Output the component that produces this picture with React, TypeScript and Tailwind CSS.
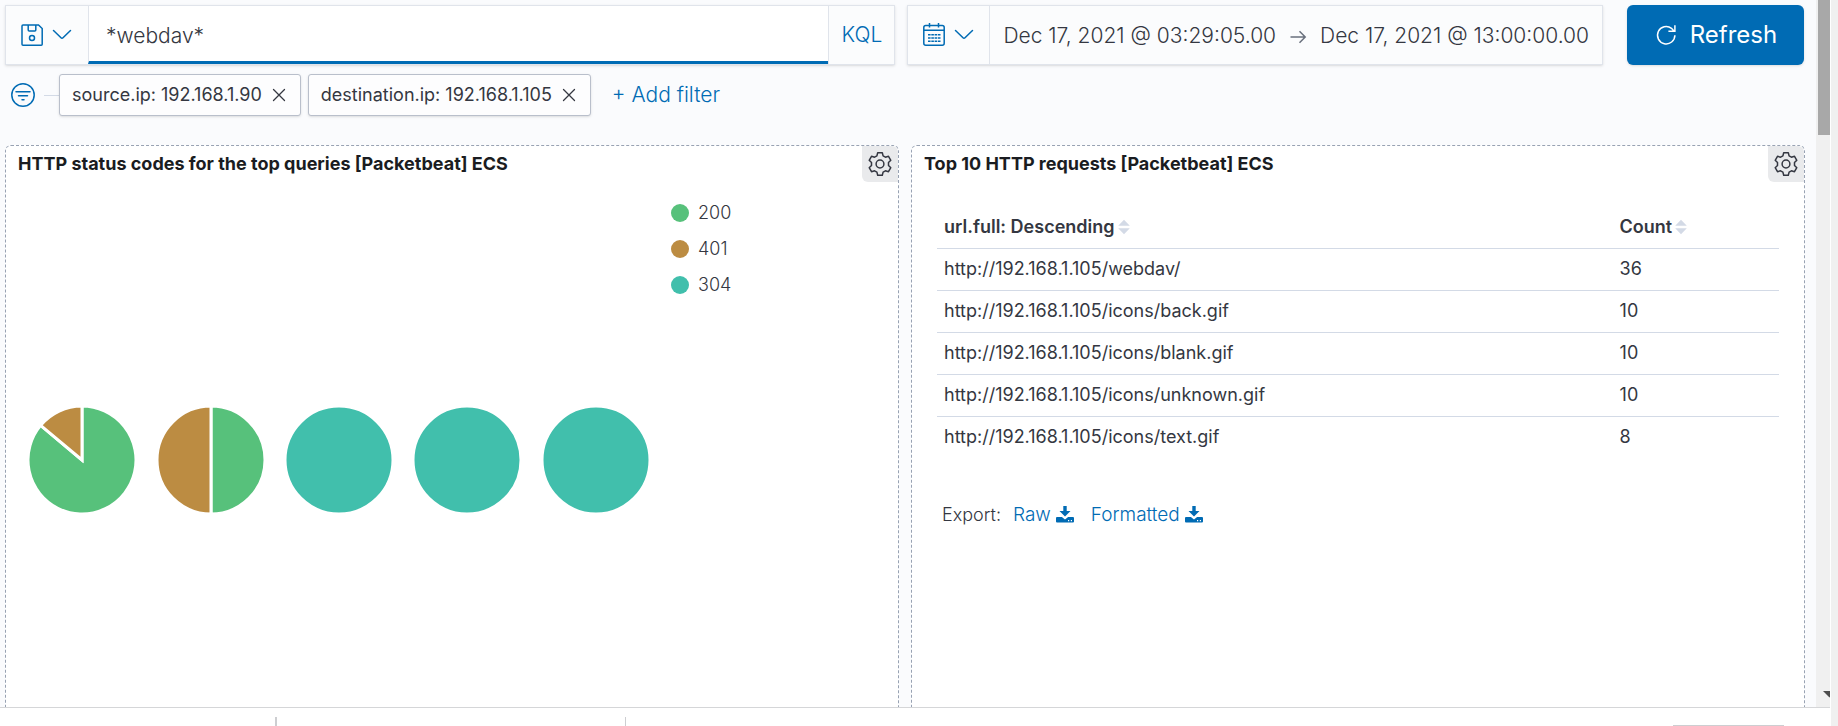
import type { ReactNode } from "react";

function Icon({ children, className = "size-6" }: { children: ReactNode; className?: string }) {
  return (
    <svg
      viewBox="0 0 24 24"
      className={`${className} shrink-0`}
      fill="none"
      stroke="currentColor"
      strokeWidth="1.5"
      aria-hidden="true"
    >
      {children}
    </svg>
  );
}

const ChevronDown = () => (
  <Icon>
    <path d="M3.500 7.500 11 14.800a1.400 1.400 0 0 0 2 0L20.500 7.500" strokeLinecap="round" />
  </Icon>
);

const SaveIcon = () => (
  <Icon>
    <path d="M3 2h15.500L22.200 5.500V21.200a1 1 0 0 1-1 1H3a1 1 0 0 1-1-1V3a1 1 0 0 1 1-1Z" />
    <path d="M8.200 2v5a1 1 0 0 0 1 1h5.600a1 1 0 0 0 1-1V2" />
    <circle cx="12" cy="15" r="2.500" />
  </Icon>
);

const CalendarIcon = () => (
  <Icon>
    <rect x="1.800" y="2.500" width="20.400" height="19.700" rx="2" />
    <path d="M1.800 7.200h20.400M7.500 0v4.500M16.500 0v4.500" />
    <path d="M6 11.800h12.500M6 15h12.500M6 18.200h12.500" strokeDasharray="2.600 0.700" strokeWidth="1.400" />
  </Icon>
);

const FilterIcon = () => (
  <Icon>
    <circle cx="12" cy="12" r="11.200" />
    <path d="M5 8.700h14M7.500 12.700h9M11 16.700h2" strokeLinecap="round" />
  </Icon>
);

const CrossIcon = () => (
  <svg viewBox="0 0 18 18" className="size-[18px]" fill="none" stroke="currentColor" strokeWidth="1.3" aria-hidden="true">
    <path d="m3.500 3.500 11 11M14.500 3.500l-11 11" strokeLinecap="round" />
  </svg>
);

const GearIcon = () => (
  <Icon>
    <path
      strokeLinejoin="round"
      d="M9.700.8h4.600l.8 3.100 2.300 1.300 3.100-.9 2.300 4-2.300 2.200v3l2.300 2.200-2.300 4-3.100-.9-2.300 1.300-.8 3.100H9.700l-.8-3.100-2.300-1.300-3.100.9-2.300-4 2.300-2.200v-3L1.200 8.300l2.300-4 3.100.9 2.300-1.300Z"
    />
    <circle cx="12" cy="12" r="3.900" />
  </Icon>
);

const RefreshIcon = () => (
  <Icon>
    <path d="M20.900 12.200a8.700 8.700 0 1 1-3.400-6.900l2.700 3M20.900 2.300v6h-6.500" />
  </Icon>
);

const ArrowRight = () => (
  <svg viewBox="0 0 18 18" className="size-[18px] shrink-0 text-[#69707d]" fill="none" stroke="currentColor" strokeWidth="1.5" aria-hidden="true">
    <path d="M1.500 10h14.500M10.500 4.300l5.700 5.700-5.700 5.700" />
  </svg>
);

const SortIcon = () => (
  <svg viewBox="0 0 12 16" className="h-4 w-3 text-[#d3dae6]" fill="currentColor" aria-hidden="true">
    <path d="M6 .8 11.800 6.800H.2ZM6 15.200 11.800 9.200H.2Z" />
  </svg>
);

const DownloadIcon = () => (
  <svg viewBox="0 0 18 18" className="size-[18px] text-[#006bb4]" fill="currentColor" aria-hidden="true">
    <path d="M7.300 0h3.400v5h3.800L9 10.500 3.500 5h3.800Z" />
    <path
      fillRule="evenodd"
      d="M1 11h4.900L9 13.500l3.100-2.500H17a1 1 0 0 1 1 1v3.600a1 1 0 0 1-1 1H1a1 1 0 0 1-1-1v-3.600a1 1 0 0 1 1-1Zm11 3v1.200h1.200v-1.200Zm2.800 0v1.200H16v-1.200Z"
    />
  </svg>
);

const GREEN = "#57c17b";
const BROWN = "#bc8c42";
const TEAL = "#41bfac";

const legend = [
  { code: "200", dot: "bg-[#57c17b]" },
  { code: "401", dot: "bg-[#bc8c42]" },
  { code: "304", dot: "bg-[#41bfac]" },
];

type Slice = { value: number; color: string };

const pies: Slice[][] = [
  [{ value: 31, color: GREEN }, { value: 5, color: BROWN }],
  [{ value: 5, color: GREEN }, { value: 5, color: BROWN }],
  [{ value: 10, color: TEAL }],
  [{ value: 10, color: TEAL }],
  [{ value: 8, color: TEAL }],
];

const requests = [
  { url: "http://192.168.1.105/webdav/", count: 36 },
  { url: "http://192.168.1.105/icons/back.gif", count: 10 },
  { url: "http://192.168.1.105/icons/blank.gif", count: 10 },
  { url: "http://192.168.1.105/icons/unknown.gif", count: 10 },
  { url: "http://192.168.1.105/icons/text.gif", count: 8 },
];

function Pie({ slices }: { slices: Slice[] }) {
  const total = slices.reduce((sum, s) => sum + s.value, 0);
  const r = 54;
  const point = (share: number) => {
    const a = share * 2 * Math.PI;
    return `${54 + r * Math.sin(a)} ${54 - r * Math.cos(a)}`;
  };
  let start = 0;
  return (
    <svg viewBox="0 0 108 108" className="size-[108px]" stroke="#fff" strokeWidth="3" role="img" aria-label="HTTP status codes">
      {slices.length === 1 ? (
        <circle cx="54" cy="54" r={r} fill={slices[0].color} />
      ) : (
        slices.map((s) => {
          const from = start;
          const share = s.value / total;
          start += share;
          return (
            <path
              key={s.color}
              fill={s.color}
              d={`M54 54L${point(from)}A${r} ${r} 0 ${share > 0.5 ? 1 : 0} 1 ${point(start)}Z`}
            />
          );
        })
      )}
    </svg>
  );
}

function Panel({ title, children }: { title: string; children: ReactNode }) {
  return (
    <section className="flex min-h-[600px] flex-1 flex-col rounded-md border border-dashed border-[#98a2b3] bg-white">
      <header className="flex items-start justify-between">
        <h2 className="pt-1 pl-3 text-lg leading-7 font-bold text-[#1a1c21]">{title}</h2>
        <button
          type="button"
          aria-label="Panel options"
          className="flex size-9 items-center justify-center rounded-tr-md rounded-bl-md bg-[#e9eaec] text-[#343741]"
        >
          <GearIcon />
        </button>
      </header>
      {children}
    </section>
  );
}

function FilterPill({ label }: { label: string }) {
  return (
    <span className="flex h-[42px] items-center gap-2 rounded-[3px] border border-[#b9bfcb] bg-[#fdfdfe] px-3 text-lg font-normal text-[#343741] shadow-sm">
      {label}
      <button type="button" aria-label={`Remove ${label}`}>
        <CrossIcon />
      </button>
    </span>
  );
}

export default function App() {
  return (
    <div className="flex h-screen overflow-hidden bg-white font-['Inter','Liberation_Sans',sans-serif] font-light text-[#343741]">
      <div className="flex min-w-0 flex-1 flex-col">
        <div className="flex min-h-0 flex-1">
          <main className="min-w-0 flex-1 overflow-hidden bg-[#fafbfd] pt-[5px] pr-[11px] pl-[5px]">
            <div className="flex pr-px text-[21px]">
              <div className="flex h-[60px] min-w-0 flex-1 border border-[#e0e4eb] bg-[#fbfcfd] shadow-sm">
                <button type="button" aria-label="Saved queries" className="flex w-[82px] items-center justify-center gap-1.5 text-[#006bb4]">
                  <SaveIcon />
                  <ChevronDown />
                </button>
                <input
                  aria-label="Search"
                  defaultValue="*webdav*"
                  className="min-w-0 flex-1 border-b-3 border-l border-b-[#006bb4] border-l-[#e0e4eb] bg-white px-[17px] pt-1 outline-none"
                />
                <button type="button" className="w-[66px] border-l border-[#e0e4eb] text-[#006bb4]">
                  KQL
                </button>
              </div>
              <div className="ml-3 flex h-[60px] border border-[#e0e4eb] bg-[#fbfcfd] shadow-sm">
                <button type="button" aria-label="Date quick select" className="flex w-[82px] items-center justify-center gap-1.5 border-r border-[#e0e4eb] text-[#006bb4]">
                  <CalendarIcon />
                  <ChevronDown />
                </button>
                <div className="flex items-center gap-[13px] px-[13px] pt-0.5">
                  <button type="button">Dec 17, 2021 @ 03:29:05.00</button>
                  <ArrowRight />
                  <button type="button">Dec 17, 2021 @ 13:00:00.00</button>
                </div>
              </div>
              <button
                type="button"
                className="ml-6 flex h-[60px] w-[177px] items-center justify-center gap-3 rounded-md bg-[#006bb4] text-2xl font-normal text-white shadow-sm"
              >
                <RefreshIcon />
                Refresh
              </button>
            </div>

            <div className="mt-[9px] flex items-center">
              <button type="button" aria-label="Filter options" className="ml-1.5 text-[#006bb4]">
                <FilterIcon />
              </button>
              <div className="ml-[9px] h-px w-[15px] bg-[#d3dae6]" />
              <div className="flex gap-[7px]">
                <FilterPill label="source.ip: 192.168.1.90" />
                <FilterPill label="destination.ip: 192.168.1.105" />
              </div>
              <button type="button" className="ml-[21px] text-[21px] text-[#006bb4]">
                + Add filter
              </button>
            </div>

            <div className="mt-[29px] flex gap-3">
              <Panel title="HTTP status codes for the top queries [Packetbeat] ECS">
                <div className="flex flex-1 px-3 pb-1.5">
                  <div className="grid flex-1 grid-cols-5 place-items-center">
                    {pies.map((slices, i) => (
                      <Pie key={i} slices={slices} />
                    ))}
                  </div>
                  <ul className="w-[226px] pt-[13px] pl-[11px] text-lg">
                    {legend.map((item) => (
                      <li key={item.code} className="flex h-9 items-center gap-[9px]">
                        <span className={`size-[18px] rounded-full ${item.dot}`} />
                        {item.code}
                      </li>
                    ))}
                  </ul>
                </div>
              </Panel>

              <Panel title="Top 10 HTTP requests [Packetbeat] ECS">
                <div className="px-[25px] pt-6 text-lg">
                  <table className="w-full table-fixed border-collapse text-left">
                    <thead>
                      <tr className="h-[42px] border-b border-[#d3dae6]">
                        <th className="w-4/5 pl-[7px] font-semibold">
                          <button type="button" className="flex items-center gap-[3px]">
                            url.full: Descending <SortIcon />
                          </button>
                        </th>
                        <th className="pl-[9px] font-semibold">
                          <button type="button" className="flex items-center gap-[3px]">
                            Count <SortIcon />
                          </button>
                        </th>
                      </tr>
                    </thead>
                    <tbody className="font-normal">
                      {requests.map((row) => (
                        <tr key={row.url} className="h-[42px] border-b border-[#d3dae6] last:border-b-0">
                          <td className="pl-[7px]">{row.url}</td>
                          <td className="pl-[9px]">{row.count}</td>
                        </tr>
                      ))}
                    </tbody>
                  </table>
                  <div className="mt-[42px] flex items-center pl-[5px]">
                    <span>Export:</span>
                    <a href="#raw" className="ml-3 flex items-center gap-[5px] text-[19px] text-[#006bb4]">
                      Raw <DownloadIcon />
                    </a>
                    <a href="#formatted" className="ml-[17px] flex items-center gap-[5px] text-[19px] text-[#006bb4]">
                      Formatted <DownloadIcon />
                    </a>
                  </div>
                </div>
              </Panel>
            </div>
          </main>
          <div className="flex w-3.5 flex-col justify-between overflow-hidden bg-[#f0f0f0] pl-0.5" aria-hidden="true">
            <div className="h-[135px] bg-[#a8a8a8]" />
            <svg viewBox="0 0 12 16" className="h-4 w-3" fill="#4d4d4d">
              <path d="M5 0H12V6.500L11 6Z" />
            </svg>
          </div>
        </div>
        <footer className="flex h-[19px] items-end border-t border-[#d5d6d8]" aria-hidden="true">
          <div className="h-[9px] w-[277px] border-r-2 border-[#cdced1]" />
          <div className="h-[9px] w-[349px] border-r border-[#cdced1]" />
          <div className="mr-[46px] ml-auto h-px w-[111px] bg-[#cdced1]" />
        </footer>
      </div>
      <div className="ml-px w-[7px] bg-[#f0f0f0]" />
    </div>
  );
}
